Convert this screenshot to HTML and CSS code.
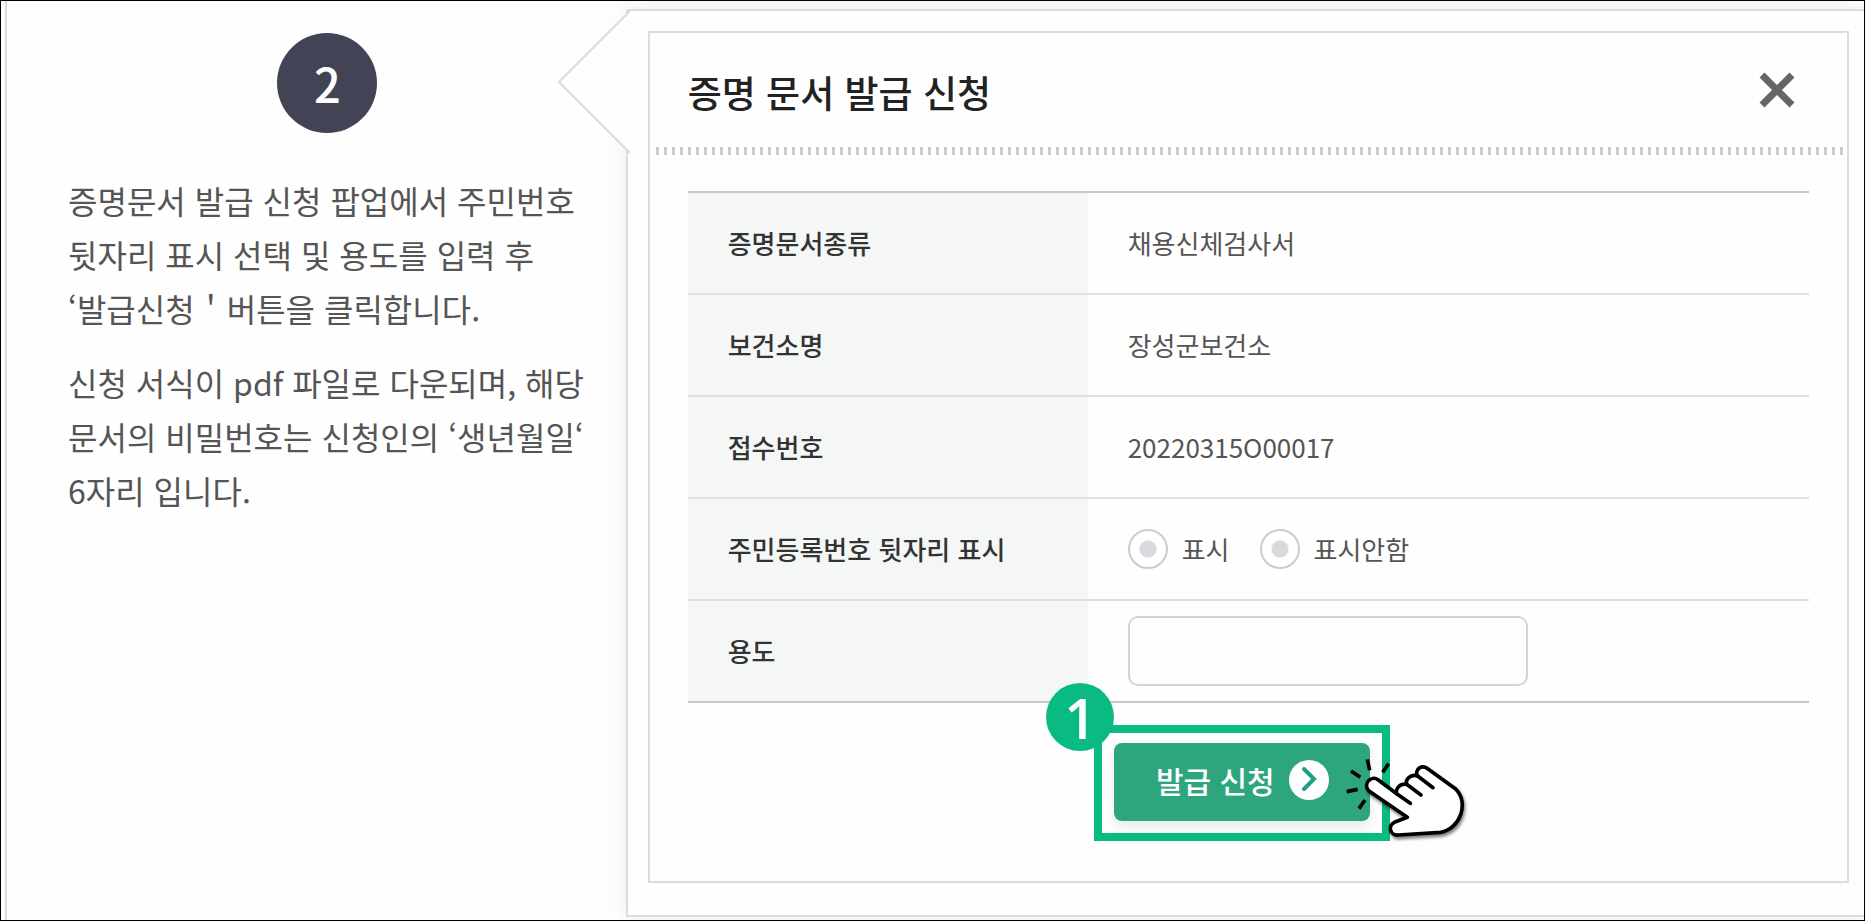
FILE: index.html
```html
<!DOCTYPE html>
<html lang="ko">
<head>
  <meta charset="utf-8">
  <title>증명 문서 발급 신청</title>
  <meta name="viewport" content="width=device-width, initial-scale=1.0">
  <link rel="stylesheet" href="styles.css">
</head>
<body>
<main class="guide">
  <section class="step">
    <div class="step-number">2</div>
    <p>증명문서 발급 신청 팝업에서 주민번호 뒷자리 표시 선택 및 용도를 입력 후 ‘발급신청＇버튼을 클릭합니다.</p>
    <p>신청 서식이 pdf 파일로 다운되며, 해당 문서의 비밀번호는 신청인의 ‘생년월일‘ 6자리 입니다.</p>
  </section>

  <section class="bubble">
    <svg class="bubble-tail" width="72" height="146" viewBox="0 0 72 146" aria-hidden="true">
      <path d="M72 2 L1 73 L72 144" fill="#fefefe" stroke="#dcdcdc" stroke-width="2"/>
    </svg>

    <form class="popup">
      <header class="popup-header">
        <h1>증명 문서 발급 신청</h1>
        <button type="button" class="close" aria-label="닫기">
          <svg width="36" height="36" viewBox="0 0 36 36">
            <path d="M3 3 L33 33 M33 3 L3 33" stroke="#666" stroke-width="7"/>
          </svg>
        </button>
      </header>
      <div class="popup-line"></div>

      <table>
        <tr>
          <th scope="row">증명문서종류</th>
          <td>채용신체검사서</td>
        </tr>
        <tr>
          <th scope="row">보건소명</th>
          <td>장성군보건소</td>
        </tr>
        <tr>
          <th scope="row">접수번호</th>
          <td>20220315O00017</td>
        </tr>
        <tr>
          <th scope="row">주민등록번호 뒷자리 표시</th>
          <td>
            <div class="radios">
              <label><input type="radio" name="display">표시</label>
              <label><input type="radio" name="display">표시안함</label>
            </div>
          </td>
        </tr>
        <tr>
          <th scope="row"><label for="purpose">용도</label></th>
          <td><input type="text" id="purpose"></td>
        </tr>
      </table>

      <div class="highlight">
        <span class="badge">1</span>
        <button type="button" class="submit">
          발급 신청
          <svg width="40" height="40" viewBox="0 0 40 40" aria-hidden="true">
            <circle cx="20" cy="20" r="20" fill="#fff"/>
            <path d="M15 9 L25 19 L15 29" fill="none" stroke="#1f9f86" stroke-width="4" stroke-linecap="round"/>
          </svg>
        </button>
        <svg class="hand" width="123" height="88" viewBox="975 291 369 264" aria-hidden="true">
          <g fill="none" stroke="#000" stroke-width="11">
            <path d="M1045 298 L1052 331"/>
            <path d="M1109 311 L1091 337"/>
            <path d="M996 333 L1024 352"/>
            <path d="M983 395 L1016 388"/>
            <path d="M1038 420 L1020 446"/>
          </g>
          <path class="hand-shape" fill="#fff" stroke="#000" stroke-width="11" stroke-linecap="round" stroke-linejoin="round"
                d="M1133 401 L1078 360 C1056 344 1030 372 1050 393 L1165 472 L1126 487 C1106 496 1112 528 1138 525 L1265 517 C1322 508 1353 428 1309 386 L1224 325 C1204 312 1186 333 1196 348 C1176 341 1158 358 1163 373 C1142 370 1129 386 1133 401 Z"/>
          <path fill="none" stroke="#000" stroke-width="11" stroke-linecap="round"
                d="M1133 401 L1174 430 M1163 373 L1206 405 M1196 348 L1242 383"/>
        </svg>
      </div>
    </form>
  </section>
</main>
</body>
</html>
```
FILE: styles.css
```css
html {
  box-sizing: border-box;
}

*, *:before, *:after {
  box-sizing: inherit;
}

body {
  margin: 0;
  background: #fefefe;
  color: #555;
  font-family: 'Noto Sans CJK KR', 'Noto Sans', sans-serif;
}

.guide {
  display: grid;
  grid-template-columns: 1fr 2fr;
  min-height: 100vh;
  border: 1px solid #000;
  padding-left: 4px;
  overflow: hidden;
}

/* left column */
.step {
  border-left: 2px solid #dcdcdc;
  padding: 32px 38px 0 61px;
  font-size: 32px;
  line-height: 54px;
  word-break: keep-all;
}

.step p {
  margin: 0 0 20px;
}

.step-number {
  width: 100px;
  height: 100px;
  margin: 0 auto 40px;
  border-radius: 50%;
  background: #434356;
  color: #fff;
  font-size: 47px;
  font-weight: 500;
  line-height: 100px;
  text-align: center;
}

/* speech bubble */
.bubble {
  position: relative;
  display: flex;
  margin: 8px 0 3px 1px;
  border: 2px solid #dcdcdc;
  border-right: 0;
  padding: 20px 15px 32px 20px;
  background: #fefefe;
  box-shadow: 0 0 20px rgba(80, 100, 120, .12);
}

.bubble-tail {
  position: absolute;
  left: -70px;
  top: -2px;
}

.popup {
  flex: 1;
  display: flex;
  flex-direction: column;
  border: 2px solid #dcdcdc;
  background: #fefefe;
}

.popup-header {
  display: flex;
  align-items: center;
  justify-content: space-between;
  height: 114px;
  padding: 0 52px 0 38px;
}

h1 {
  margin: 0;
  padding-top: 4px;
  color: #222;
  font-size: 37px;
  font-weight: 500;
}

button {
  border: 0;
  cursor: pointer;
  font-family: inherit;
}

.close {
  padding: 0;
  background: none;
}

.close svg {
  display: block;
}

.popup-line {
  height: 8px;
  margin: 0 3px 0 6px;
  background: repeating-linear-gradient(90deg, #ccc 0 3px, transparent 3px 8px);
}

table {
  margin: 36px 38px 0;
  border-collapse: collapse;
  border-top: 2px solid #c8c8c8;
  border-bottom: 2px solid #c8c8c8;
  font-size: 26px;
  line-height: 36px;
}

tr + tr {
  border-top: 2px solid #dedede;
}

th, td {
  height: 102px;
  padding: 0 0 0 40px;
  text-align: left;
}

th {
  width: 400px;
  background: #f5f7f6;
  color: #333;
  font-weight: 500;
}

.radios {
  display: flex;
  gap: 30px;
}

.radios label {
  display: flex;
  align-items: center;
  gap: 14px;
}

input[type=radio] {
  appearance: none;
  width: 40px;
  height: 40px;
  margin: 0;
  border: 2px solid #ccc;
  border-radius: 50%;
  background: radial-gradient(circle, #d8dae0 8px, #fff 9px);
}

input[type=text] {
  display: block;
  width: 400px;
  height: 70px;
  border: 2px solid #d4d4d4;
  border-radius: 10px;
  padding: 0 16px;
  background: #fefefe;
  font: inherit;
}

/* submit button with its marker */
.highlight {
  position: relative;
  align-self: center;
  margin: 22px 12px 40px 0;
  border: 8px solid #0aba83;
  padding: 10px 12px 12px;
}

.submit {
  display: flex;
  align-items: center;
  justify-content: center;
  gap: 14px;
  width: 256px;
  height: 78px;
  border-radius: 8px;
  padding: 0 0 4px;
  background: #2da67e;
  box-shadow: 0 6px 12px rgba(80, 100, 140, .12);
  color: #fff;
  font-size: 30px;
  font-weight: 500;
}

.badge {
  position: absolute;
  left: -56px;
  top: -50px;
  width: 68px;
  height: 68px;
  border-radius: 50%;
  background: #0aba83;
  color: #fff;
  font-family: 'Open Sans', sans-serif;
  font-size: 56px;
  font-weight: 600;
  line-height: 68px;
  text-align: center;
}

.hand {
  position: absolute;
  left: 242px;
  top: 24px;
  overflow: visible;
}

.hand-shape {
  filter: drop-shadow(4px 8px 4px rgba(0, 0, 0, .5));
}
```
